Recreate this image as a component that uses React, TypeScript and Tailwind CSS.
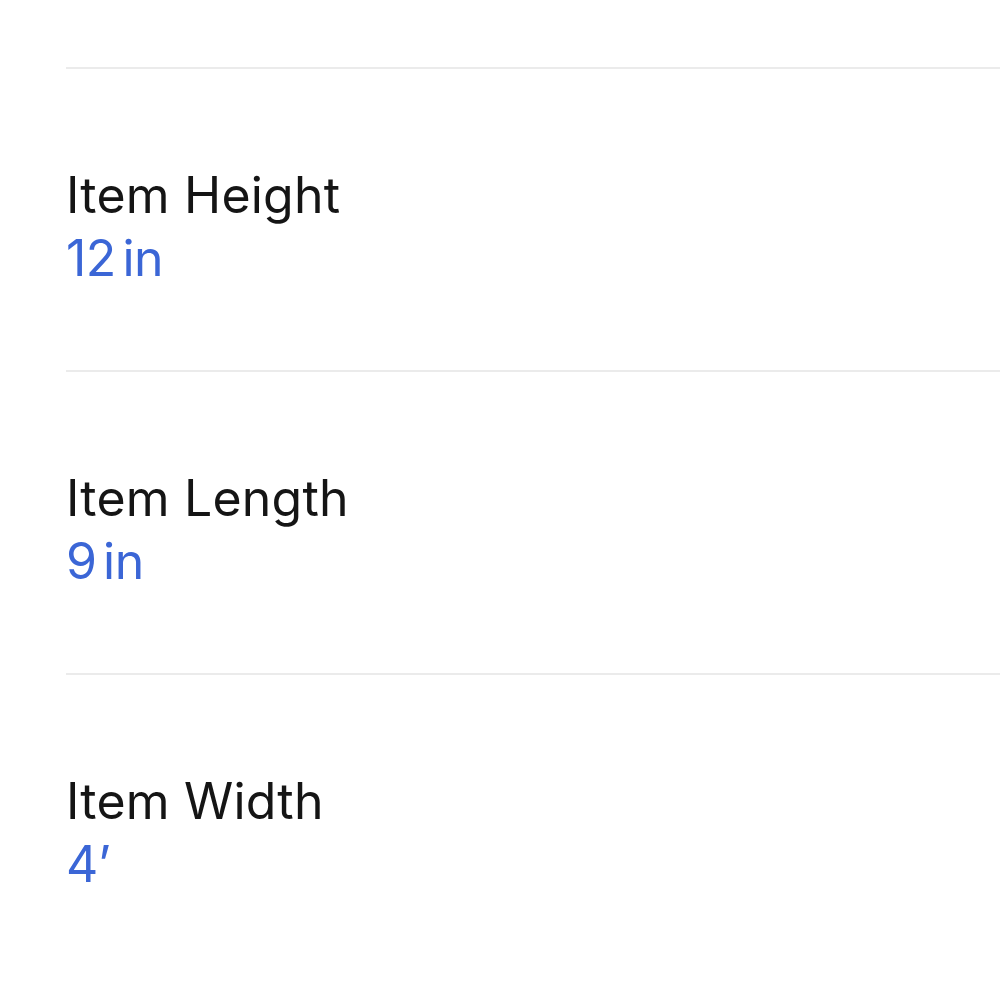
import React from "react";

const rows = [
  { label: "Item Height", value: "12 in" },
  { label: "Item Length", value: "9 in" },
  { label: "Item Width", value: "4’" },
];

export default function App() {
  return (
    <div className="w-[1000px] h-[1000px] bg-white overflow-hidden pt-[67px] pl-[66px]" style={{ fontFamily: "Inter, 'Noto Sans', sans-serif" }}>
      <div className="border-t-2 border-[#ebebeb]">
        {rows.map((r, i) => (
          <div key={r.label} className={i < rows.length - 1 ? "border-b-2 border-[#ebebeb] pt-[95px] pb-[80px]" : "pt-[95px] pb-[80px]"}>
            <div className="text-[50px] leading-[63px] text-[#151515] tracking-[0.2px]">{r.label}</div>
            <div className="text-[50px] leading-[63px] text-[#3b66d6] tracking-[-0.5px] [word-spacing:-7px]">{r.value}</div>
          </div>
        ))}
      </div>
    </div>
  );
}
